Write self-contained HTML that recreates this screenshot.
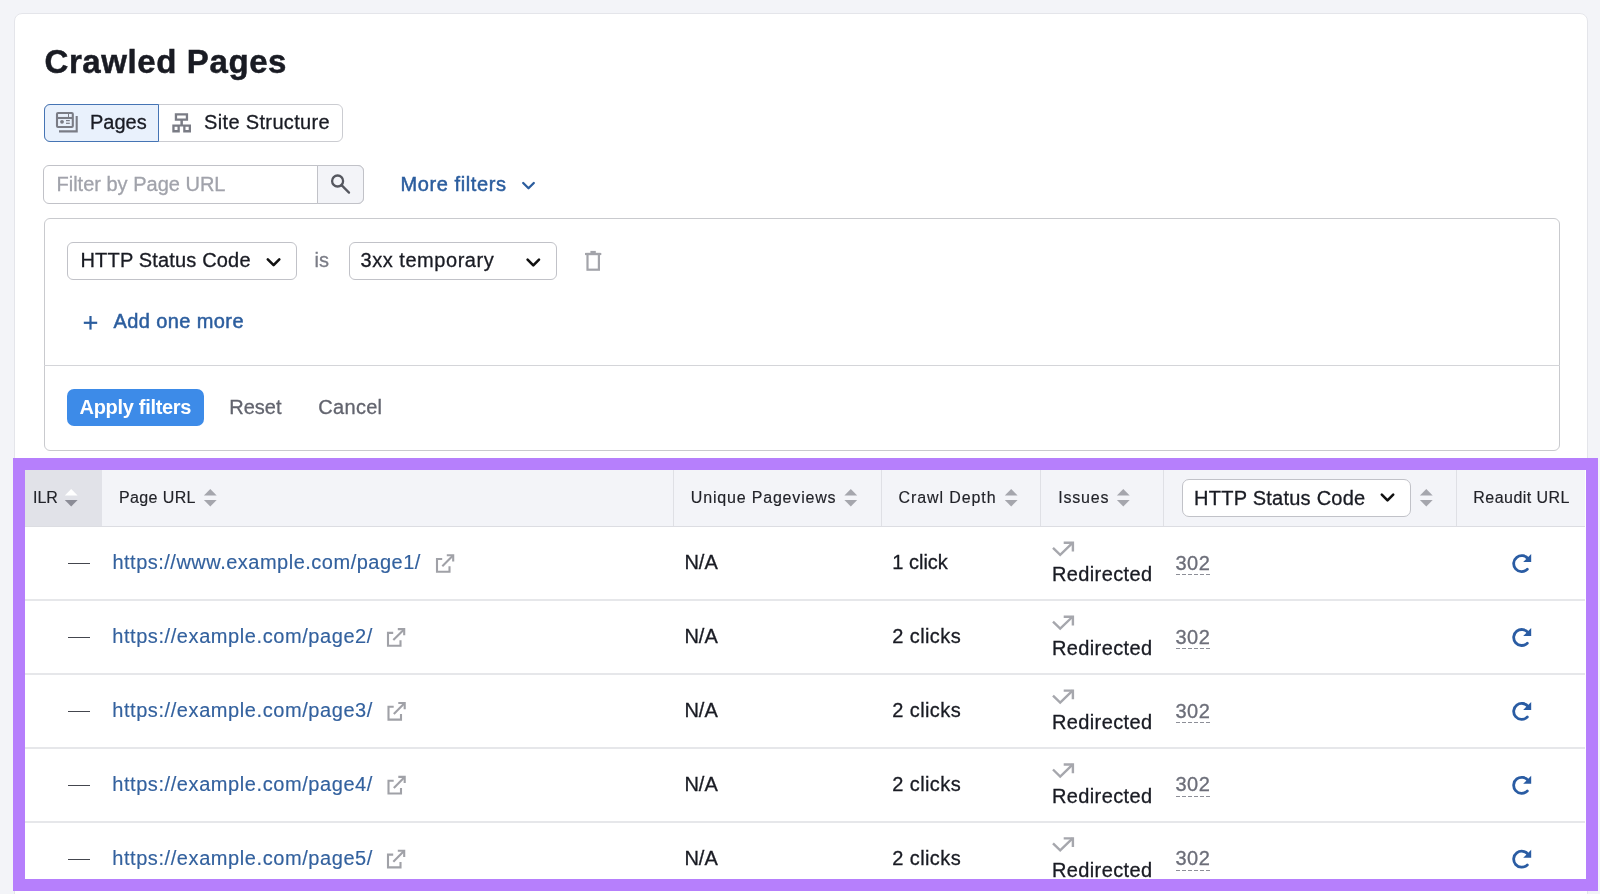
<!DOCTYPE html>
<html><head><meta charset="utf-8"><style>
html,body{margin:0;padding:0;}
body{will-change:transform;width:1600px;height:894px;overflow:hidden;background:#f3f4f8;position:relative;font-family:"Liberation Sans", sans-serif;}
.t{position:absolute;white-space:nowrap;-webkit-text-stroke-width:0.3px;}
.b{position:absolute;}
.ic{position:absolute;}
.ext{display:inline-block;width:20px;height:20px;margin-left:13px;vertical-align:-3px;background:no-repeat center/contain;}
</style></head><body>
<div class="b" style="left:14px;top:13px;width:1574px;height:987px;background:#fff;border:1px solid #e4e5ea;border-radius:8px;box-sizing:border-box;"></div>
<div class="t " style="left:44.5px;top:44.56px;font-size:33px;line-height:33px;color:#191b23;font-weight:700;letter-spacing:0.6px;-webkit-text-stroke:0.5px #191b23;">Crawled Pages</div>
<div class="b" style="left:43.5px;top:103.5px;width:299.0px;height:38.5px;border:1px solid #cbccd1;border-radius:6px;box-sizing:border-box;background:#fff;"></div>
<div class="b" style="left:43.5px;top:103.5px;width:115.5px;height:38.5px;border:1px solid #4574b4;border-radius:6px 0 0 6px;box-sizing:border-box;background:#e9f1fc;"></div>
<div class="t " style="left:90px;top:112.07px;font-size:20px;line-height:20px;color:#191b23;font-weight:400;">Pages</div>
<div class="t " style="left:204px;top:112.07px;font-size:20px;line-height:20px;color:#191b23;font-weight:400;letter-spacing:0.35px;">Site Structure</div>
<svg class="ic" style="left:0;top:0" width="1600" height="894" viewBox="0 0 1600 894">
<g fill="none" stroke="#7a7c85" stroke-width="2.1">
<rect x="57" y="113" width="15.8" height="14" rx="1"/>
<line x1="57" y1="118" x2="73" y2="118"/>
<polyline points="59,131.4 76.7,131.4 76.7,116"/>
</g>
<g fill="#7a7c85"><circle cx="62" cy="121.8" r="1.9"/><rect x="66" y="120" width="3.8" height="1.2"/><rect x="66" y="122.7" width="3.8" height="1.2"/><rect x="68" y="114" width="1" height="3"/></g>
</svg>
<svg class="ic" style="left:0;top:0" width="1600" height="894" viewBox="0 0 1600 894">
<path fill="#7a7c85" fill-rule="evenodd" d="M174.8 113.2H188.1V120.7H174.8Z M177.1 115.5V118.4H185.8V115.5Z M180.4 120.7H182.9V124.4H180.4Z M172.3 124.4H191V132.4H172.3Z M174.6 126.7V130.1H177.5V126.7Z M179.8 126.6V132.4H183.2V126.6Z M185.5 126.7V130.1H188.7V126.7Z"/>
</svg>
<div class="b" style="left:43px;top:165px;width:321px;height:38.5px;border:1px solid #c1c2c8;border-radius:6px;box-sizing:border-box;background:#fff;"></div>
<div class="b" style="left:317px;top:165px;width:47px;height:38.5px;border:1px solid #c1c2c8;border-radius:0 6px 6px 0;box-sizing:border-box;background:#f3f4f8;"></div>
<div class="t " style="left:56.5px;top:174.07px;font-size:20px;line-height:20px;color:#a1a3ab;font-weight:400;">Filter by Page URL</div>
<svg class="ic" style="left:0;top:0" width="1600" height="894" viewBox="0 0 1600 894">
<g fill="none" stroke="#55575f" stroke-width="2.3" stroke-linecap="round">
<circle cx="337.6" cy="181" r="5.5"/><line x1="341.8" y1="185.4" x2="349" y2="192.6"/>
</g></svg>
<div class="t " style="left:400.5px;top:173.57px;font-size:20px;line-height:20px;color:#2b5d9e;font-weight:400;-webkit-text-stroke:0.5px #2b5d9e;letter-spacing:0.6px;">More filters</div>
<svg class="ic" style="left:0;top:0" width="1600" height="894" viewBox="0 0 1600 894">
<polyline points="523.2,183 528.5,188.3 533.8,183" fill="none" stroke="#2b5d9e" stroke-width="2.3" stroke-linecap="round" stroke-linejoin="round"/>
</svg>
<div class="b" style="left:44px;top:218px;width:1515.5px;height:232.5px;border:1px solid #c9cace;border-radius:6px;box-sizing:border-box;background:#fff;"></div>
<div class="b" style="left:44px;top:364.5px;width:1515.5px;height:1.0px;background:#d4d5d9;"></div>
<div class="b" style="left:67px;top:242px;width:230px;height:38px;border:1px solid #c1c2c8;border-radius:6px;box-sizing:border-box;background:#fff;"></div>
<div class="t " style="left:80.5px;top:250.07px;font-size:20px;line-height:20px;color:#191b23;font-weight:400;letter-spacing:0.17px;">HTTP Status Code</div>
<div class="t " style="left:314.5px;top:250.07px;font-size:20px;line-height:20px;color:#7a7c86;font-weight:400;">is</div>
<div class="b" style="left:348.5px;top:242px;width:208.0px;height:38px;border:1px solid #c1c2c8;border-radius:6px;box-sizing:border-box;background:#fff;"></div>
<div class="t " style="left:360.5px;top:250.07px;font-size:20px;line-height:20px;color:#191b23;font-weight:400;letter-spacing:0.54px;">3xx temporary</div>
<svg class="ic" style="left:0;top:0" width="1600" height="894" viewBox="0 0 1600 894">
<g fill="none" stroke="#111" stroke-width="2.6" stroke-linecap="round" stroke-linejoin="round">
<polyline points="267.8,259.4 273.6,265.2 279.3,259.4"/>
<polyline points="527.6,259.6 533.3,265.3 539,259.6"/>
</g>
<g fill="none" stroke="#a3a4aa" stroke-width="2.2">
<line x1="585" y1="254" x2="601.3" y2="254"/>
<rect x="587.5" y="254" width="11.4" height="15.7"/>
<line x1="590.4" y1="252" x2="595.8" y2="252"/>
</g>
</svg>
<svg class="ic" style="left:0;top:0" width="1600" height="894" viewBox="0 0 1600 894">
<g stroke="#2b5d9e" stroke-width="2.2"><line x1="83.8" y1="322.8" x2="97.2" y2="322.8"/><line x1="90.5" y1="316" x2="90.5" y2="329.6"/></g>
</svg>
<div class="t " style="left:113.5px;top:310.87px;font-size:20px;line-height:20px;color:#2b5d9e;font-weight:400;-webkit-text-stroke:0.5px #2e5f9f;letter-spacing:0.4px;">Add one more</div>
<div class="b" style="left:67.4px;top:388.5px;width:136.79999999999998px;height:37.89999999999998px;background:#3d8be8;border-radius:7px;"></div>
<div class="t " style="left:79.5px;top:397.07px;font-size:20px;line-height:20px;color:#fff;font-weight:700;letter-spacing:-0.3px;-webkit-text-stroke-width:0;">Apply filters</div>
<div class="t " style="left:229.3px;top:397.07px;font-size:20px;line-height:20px;color:#62646e;font-weight:400;">Reset</div>
<div class="t " style="left:318.3px;top:397.07px;font-size:20px;line-height:20px;color:#62646e;font-weight:400;letter-spacing:0.3px;">Cancel</div>
<div class="b" style="left:25px;top:470px;width:1560px;height:408px;background:#fff;"></div>
<div class="b" style="left:25px;top:470px;width:1560px;height:57px;background:#f3f4f8;"></div>
<div class="b" style="left:25px;top:470px;width:77px;height:57px;background:#e1e2e8;"></div>
<div class="b" style="left:25px;top:526px;width:1560px;height:1px;background:#dcdde2;"></div>
<div class="b" style="left:672.5px;top:470px;width:1.0px;height:56px;background:#dfe0e5;"></div>
<div class="b" style="left:880.5px;top:470px;width:1.0px;height:56px;background:#dfe0e5;"></div>
<div class="b" style="left:1040px;top:470px;width:1px;height:56px;background:#dfe0e5;"></div>
<div class="b" style="left:1163px;top:470px;width:1px;height:56px;background:#dfe0e5;"></div>
<div class="b" style="left:1456px;top:470px;width:1px;height:56px;background:#dfe0e5;"></div>
<div class="b" style="left:25px;top:599px;width:1560px;height:1.5px;background:#e6e7ea;"></div>
<div class="b" style="left:25px;top:673px;width:1560px;height:1.5px;background:#e6e7ea;"></div>
<div class="b" style="left:25px;top:747px;width:1560px;height:1.5px;background:#e6e7ea;"></div>
<div class="b" style="left:25px;top:821px;width:1560px;height:1.5px;background:#e6e7ea;"></div>
<div class="t " style="left:33px;top:489.65px;font-size:16px;line-height:16px;color:#222329;font-weight:400;-webkit-text-stroke-width:0.15px;">ILR</div>
<div class="t " style="left:119px;top:489.65px;font-size:16px;line-height:16px;color:#222329;font-weight:400;letter-spacing:0.38px;-webkit-text-stroke-width:0.15px;">Page URL</div>
<div class="t " style="left:690.8px;top:489.65px;font-size:16px;line-height:16px;color:#222329;font-weight:400;letter-spacing:0.82px;-webkit-text-stroke-width:0.15px;">Unique Pageviews</div>
<div class="t " style="left:898.5px;top:489.65px;font-size:16px;line-height:16px;color:#222329;font-weight:400;letter-spacing:0.9px;-webkit-text-stroke-width:0.15px;">Crawl Depth</div>
<div class="t " style="left:1058.2px;top:489.65px;font-size:16px;line-height:16px;color:#222329;font-weight:400;letter-spacing:0.8px;-webkit-text-stroke-width:0.15px;">Issues</div>
<div class="t " style="left:1473.3px;top:489.65px;font-size:16px;line-height:16px;color:#222329;font-weight:400;letter-spacing:0.46px;-webkit-text-stroke-width:0.15px;">Reaudit URL</div>
<svg class="ic" style="left:0;top:0" width="1600" height="894" viewBox="0 0 1600 894"><polygon points="64.8,495.6 71.2,489 77.60000000000001,495.6" fill="#ffffff"/><polygon points="64.8,500 71.2,506.4 77.60000000000001,500" fill="#8b8c96"/><polygon points="203.9,495.6 210.3,489 216.70000000000002,495.6" fill="#a5a6ad"/><polygon points="203.9,500 210.3,506.4 216.70000000000002,500" fill="#a5a6ad"/><polygon points="844.4,495.6 850.8,489 857.1999999999999,495.6" fill="#a5a6ad"/><polygon points="844.4,500 850.8,506.4 857.1999999999999,500" fill="#a5a6ad"/><polygon points="1004.8000000000001,495.6 1011.2,489 1017.6,495.6" fill="#a5a6ad"/><polygon points="1004.8000000000001,500 1011.2,506.4 1017.6,500" fill="#a5a6ad"/><polygon points="1116.8999999999999,495.6 1123.3,489 1129.7,495.6" fill="#a5a6ad"/><polygon points="1116.8999999999999,500 1123.3,506.4 1129.7,500" fill="#a5a6ad"/><polygon points="1419.8999999999999,495.6 1426.3,489 1432.7,495.6" fill="#a5a6ad"/><polygon points="1419.8999999999999,500 1426.3,506.4 1432.7,500" fill="#a5a6ad"/></svg>
<div class="b" style="left:1181.5px;top:479px;width:229.5px;height:37.5px;border:1px solid #c1c2c8;border-radius:7px;box-sizing:border-box;background:#fff;"></div>
<div class="t " style="left:1194px;top:487.57px;font-size:20px;line-height:20px;color:#191b23;font-weight:400;letter-spacing:0.25px;">HTTP Status Code</div>
<svg class="ic" style="left:0;top:0" width="1600" height="894" viewBox="0 0 1600 894">
<polyline points="1381.8,494.6 1387.5,500.3 1393.2,494.6" fill="none" stroke="#111" stroke-width="2.6" stroke-linecap="round" stroke-linejoin="round"/>
</svg>
<div class="b" style="left:67.6px;top:563.0px;width:22.0px;height:1.3999999999999773px;background:#44464e;"></div>
<div class="t " style="left:112.4px;top:552.47px;font-size:20px;line-height:20px;color:#33619e;font-weight:400;letter-spacing:0.5px;-webkit-text-stroke-width:0.15px;">https://www.example.com/page1/</div>
<div class="t " style="left:684.4px;top:552.37px;font-size:20px;line-height:20px;color:#191b23;font-weight:400;">N/A</div>
<div class="t " style="left:892.3px;top:552.37px;font-size:20px;line-height:20px;color:#191b23;font-weight:400;">1 click</div>
<div class="t " style="left:1052px;top:564.07px;font-size:20px;line-height:20px;color:#191b23;font-weight:400;letter-spacing:0.37px;">Redirected</div>
<div class="t " style="left:1175.5px;top:552.77px;font-size:20px;line-height:20px;color:#6c6e79;font-weight:400;letter-spacing:0.5px;">302</div>
<div class="b" style="left:1175.5px;top:574.3px;width:36.0px;height:1.2000000000000455px;background:repeating-linear-gradient(90deg,#8d8f98 0 3.6px,transparent 3.6px 6px);"></div>
<div class="b" style="left:67.6px;top:636.9px;width:22.0px;height:1.3999999999999773px;background:#44464e;"></div>
<div class="t " style="left:112.2px;top:626.37px;font-size:20px;line-height:20px;color:#33619e;font-weight:400;letter-spacing:0.58px;-webkit-text-stroke-width:0.15px;">https://example.com/page2/</div>
<div class="t " style="left:684.4px;top:626.27px;font-size:20px;line-height:20px;color:#191b23;font-weight:400;">N/A</div>
<div class="t " style="left:892.3px;top:626.27px;font-size:20px;line-height:20px;color:#191b23;font-weight:400;letter-spacing:0.4px;">2 clicks</div>
<div class="t " style="left:1052px;top:637.97px;font-size:20px;line-height:20px;color:#191b23;font-weight:400;letter-spacing:0.37px;">Redirected</div>
<div class="t " style="left:1175.5px;top:626.67px;font-size:20px;line-height:20px;color:#6c6e79;font-weight:400;letter-spacing:0.5px;">302</div>
<div class="b" style="left:1175.5px;top:648.1999999999999px;width:36.0px;height:1.2000000000000455px;background:repeating-linear-gradient(90deg,#8d8f98 0 3.6px,transparent 3.6px 6px);"></div>
<div class="b" style="left:67.6px;top:710.8px;width:22.0px;height:1.400000000000091px;background:#44464e;"></div>
<div class="t " style="left:112.2px;top:700.27px;font-size:20px;line-height:20px;color:#33619e;font-weight:400;letter-spacing:0.58px;-webkit-text-stroke-width:0.15px;">https://example.com/page3/</div>
<div class="t " style="left:684.4px;top:700.17px;font-size:20px;line-height:20px;color:#191b23;font-weight:400;">N/A</div>
<div class="t " style="left:892.3px;top:700.17px;font-size:20px;line-height:20px;color:#191b23;font-weight:400;letter-spacing:0.4px;">2 clicks</div>
<div class="t " style="left:1052px;top:711.87px;font-size:20px;line-height:20px;color:#191b23;font-weight:400;letter-spacing:0.37px;">Redirected</div>
<div class="t " style="left:1175.5px;top:700.57px;font-size:20px;line-height:20px;color:#6c6e79;font-weight:400;letter-spacing:0.5px;">302</div>
<div class="b" style="left:1175.5px;top:722.0999999999999px;width:36.0px;height:1.2000000000000455px;background:repeating-linear-gradient(90deg,#8d8f98 0 3.6px,transparent 3.6px 6px);"></div>
<div class="b" style="left:67.6px;top:784.7px;width:22.0px;height:1.3999999999999773px;background:#44464e;"></div>
<div class="t " style="left:112.2px;top:774.17px;font-size:20px;line-height:20px;color:#33619e;font-weight:400;letter-spacing:0.58px;-webkit-text-stroke-width:0.15px;">https://example.com/page4/</div>
<div class="t " style="left:684.4px;top:774.07px;font-size:20px;line-height:20px;color:#191b23;font-weight:400;">N/A</div>
<div class="t " style="left:892.3px;top:774.07px;font-size:20px;line-height:20px;color:#191b23;font-weight:400;letter-spacing:0.4px;">2 clicks</div>
<div class="t " style="left:1052px;top:785.77px;font-size:20px;line-height:20px;color:#191b23;font-weight:400;letter-spacing:0.37px;">Redirected</div>
<div class="t " style="left:1175.5px;top:774.47px;font-size:20px;line-height:20px;color:#6c6e79;font-weight:400;letter-spacing:0.5px;">302</div>
<div class="b" style="left:1175.5px;top:796.0px;width:36.0px;height:1.2000000000000455px;background:repeating-linear-gradient(90deg,#8d8f98 0 3.6px,transparent 3.6px 6px);"></div>
<div class="b" style="left:67.6px;top:858.6px;width:22.0px;height:1.3999999999999773px;background:#44464e;"></div>
<div class="t " style="left:112.2px;top:848.07px;font-size:20px;line-height:20px;color:#33619e;font-weight:400;letter-spacing:0.58px;-webkit-text-stroke-width:0.15px;">https://example.com/page5/</div>
<div class="t " style="left:684.4px;top:847.97px;font-size:20px;line-height:20px;color:#191b23;font-weight:400;">N/A</div>
<div class="t " style="left:892.3px;top:847.97px;font-size:20px;line-height:20px;color:#191b23;font-weight:400;letter-spacing:0.4px;">2 clicks</div>
<div class="t " style="left:1052px;top:859.67px;font-size:20px;line-height:20px;color:#191b23;font-weight:400;letter-spacing:0.37px;">Redirected</div>
<div class="t " style="left:1175.5px;top:848.37px;font-size:20px;line-height:20px;color:#6c6e79;font-weight:400;letter-spacing:0.5px;">302</div>
<div class="b" style="left:1175.5px;top:869.9px;width:36.0px;height:1.2000000000000455px;background:repeating-linear-gradient(90deg,#8d8f98 0 3.6px,transparent 3.6px 6px);"></div>
<svg class="ic" style="left:0;top:0" width="1600" height="894" viewBox="0 0 1600 894"><g fill="none" stroke="#a6a7ad" stroke-width="2.4" stroke-linejoin="miter"><polyline points="1053,547.8 1060.2,554.8 1072.8,542.6"/><polyline points="1063.7,542.8 1072.9,542.8 1072.9,551.5"/></g><g fill="none" stroke="#2a5ca3" stroke-width="2.8"><path d="M 1527.3 569.30 A 8 8 0 1 1 1528.3 559.10" stroke-linecap="round"/></g><polygon points="1531.2,554.10 1531.2,562.10 1523.2,562.10" fill="#2a5ca3"/><g fill="none" stroke="#a6a7ad" stroke-width="2.4" stroke-linejoin="miter"><polyline points="1053,621.7 1060.2,628.7 1072.8,616.5"/><polyline points="1063.7,616.7 1072.9,616.7 1072.9,625.4"/></g><g fill="none" stroke="#2a5ca3" stroke-width="2.8"><path d="M 1527.3 643.20 A 8 8 0 1 1 1528.3 633.00" stroke-linecap="round"/></g><polygon points="1531.2,628.00 1531.2,636.00 1523.2,636.00" fill="#2a5ca3"/><g fill="none" stroke="#a6a7ad" stroke-width="2.4" stroke-linejoin="miter"><polyline points="1053,695.6 1060.2,702.6 1072.8,690.4"/><polyline points="1063.7,690.6 1072.9,690.6 1072.9,699.3"/></g><g fill="none" stroke="#2a5ca3" stroke-width="2.8"><path d="M 1527.3 717.10 A 8 8 0 1 1 1528.3 706.90" stroke-linecap="round"/></g><polygon points="1531.2,701.90 1531.2,709.90 1523.2,709.90" fill="#2a5ca3"/><g fill="none" stroke="#a6a7ad" stroke-width="2.4" stroke-linejoin="miter"><polyline points="1053,769.5 1060.2,776.5 1072.8,764.3"/><polyline points="1063.7,764.5 1072.9,764.5 1072.9,773.2"/></g><g fill="none" stroke="#2a5ca3" stroke-width="2.8"><path d="M 1527.3 791.00 A 8 8 0 1 1 1528.3 780.80" stroke-linecap="round"/></g><polygon points="1531.2,775.80 1531.2,783.80 1523.2,783.80" fill="#2a5ca3"/><g fill="none" stroke="#a6a7ad" stroke-width="2.4" stroke-linejoin="miter"><polyline points="1053,843.4 1060.2,850.4 1072.8,838.2"/><polyline points="1063.7,838.4 1072.9,838.4 1072.9,847.1"/></g><g fill="none" stroke="#2a5ca3" stroke-width="2.8"><path d="M 1527.3 864.90 A 8 8 0 1 1 1528.3 854.70" stroke-linecap="round"/></g><polygon points="1531.2,849.70 1531.2,857.70 1523.2,857.70" fill="#2a5ca3"/><g transform="translate(436,554.00)" fill="none" stroke="#a0a1a7" stroke-width="2.1"><path d="M 6.2 5 H 1 V 17.8 H 13.5 V 12.3"/><line x1="6.3" y1="12.2" x2="17" y2="1.5"/><polyline points="10.8,1.2 17.2,1.2 17.2,7.4"/></g><g transform="translate(387,627.90)" fill="none" stroke="#a0a1a7" stroke-width="2.1"><path d="M 6.2 5 H 1 V 17.8 H 13.5 V 12.3"/><line x1="6.3" y1="12.2" x2="17" y2="1.5"/><polyline points="10.8,1.2 17.2,1.2 17.2,7.4"/></g><g transform="translate(387.5,701.80)" fill="none" stroke="#a0a1a7" stroke-width="2.1"><path d="M 6.2 5 H 1 V 17.8 H 13.5 V 12.3"/><line x1="6.3" y1="12.2" x2="17" y2="1.5"/><polyline points="10.8,1.2 17.2,1.2 17.2,7.4"/></g><g transform="translate(387.5,775.70)" fill="none" stroke="#a0a1a7" stroke-width="2.1"><path d="M 6.2 5 H 1 V 17.8 H 13.5 V 12.3"/><line x1="6.3" y1="12.2" x2="17" y2="1.5"/><polyline points="10.8,1.2 17.2,1.2 17.2,7.4"/></g><g transform="translate(387,849.60)" fill="none" stroke="#a0a1a7" stroke-width="2.1"><path d="M 6.2 5 H 1 V 17.8 H 13.5 V 12.3"/><line x1="6.3" y1="12.2" x2="17" y2="1.5"/><polyline points="10.8,1.2 17.2,1.2 17.2,7.4"/></g></svg>
<div class="b" style="left:13px;top:458px;width:1585px;height:432.5px;border:solid #b67ffc;border-width:12.8px 12.5px 12px 12.3px;box-sizing:border-box;"></div>
</body></html>
